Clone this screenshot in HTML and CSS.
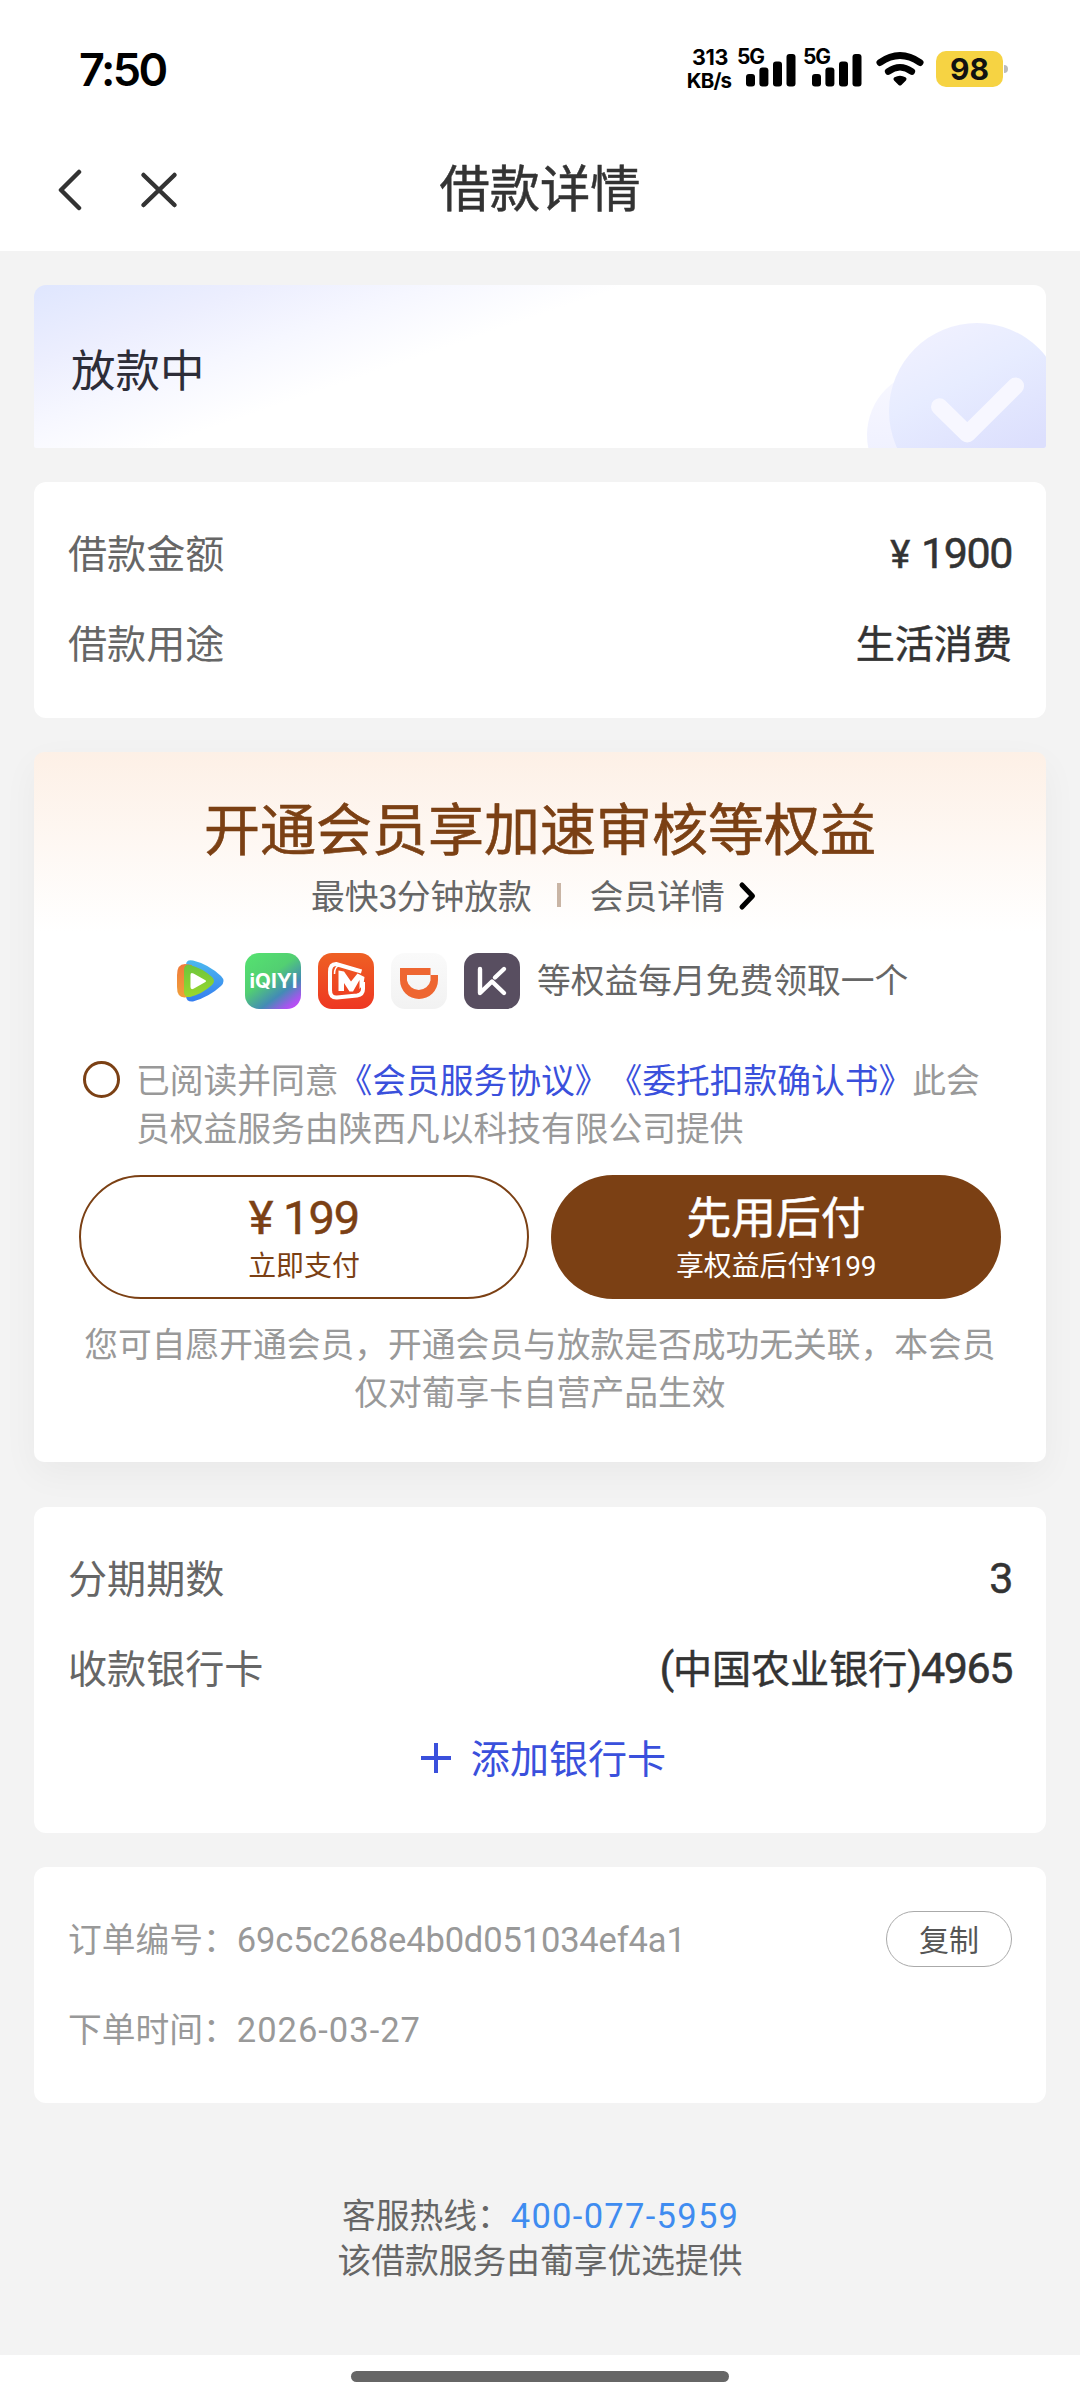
FILE: index.html
```html
<!DOCTYPE html>
<html lang="zh-CN">
<head>
<meta charset="utf-8">
<title>借款详情</title>
<link rel="stylesheet" href="styles.css">
</head>
<body>
<header class="top">
  <div class="status">
    <span class="clock">7:50</span>
    <div class="indicators">
      <div class="speed"><span class="speed-value">313</span><span class="speed-unit">KB/s</span></div>
      <svg class="signal" viewBox="0 0 62 46" width="62" height="46">
        <text class="net" x="0" y="21.5" textLength="28">5G</text>
        <rect x="9" y="32" width="9" height="12.5" rx="3"/><rect x="22.400" y="25.500" width="9" height="19" rx="3"/>
        <rect x="36" y="19.500" width="9" height="25" rx="3"/><rect x="49.500" y="12" width="9" height="32.500" rx="3"/>
      </svg>
      <svg class="signal" viewBox="0 0 62 46" width="62" height="46">
        <text class="net" x="0" y="21.5" textLength="28">5G</text>
        <rect x="9" y="32" width="9" height="12.5" rx="3"/><rect x="22.400" y="25.500" width="9" height="19" rx="3"/>
        <rect x="36" y="19.500" width="9" height="25" rx="3"/><rect x="49.500" y="12" width="9" height="32.500" rx="3"/>
      </svg>
      <svg class="wifi" viewBox="0 0 48 36" width="48" height="36" fill="none" stroke="#000" stroke-linecap="round">
        <path d="M4 11.5Q24-2.5 44 11.5" stroke-width="7"/>
        <path d="M12.2 20.5Q24 12 35.8 20.5" stroke-width="6.6"/>
        <path d="M19.5 28Q24 25.5 28.5 28L24 32.5Z" fill="#000" stroke-width="4" stroke-linejoin="round"/>
      </svg>
      <div class="battery"><span class="level">98</span></div><i class="nub"></i>
    </div>
  </div>
  <nav class="nav">
    <div class="nav-icons">
      <svg viewBox="0 0 26 44" width="26" height="44"><path d="M23 4L5 22L23 40"/></svg>
      <svg viewBox="0 0 40 40" width="40" height="40"><path d="M4.5 5L35.5 35M35.5 5L4.5 35"/></svg>
    </div>
    <h1 class="nav-title">借款详情</h1>
  </nav>
</header>

<main class="content">
  <section class="banner">
    <h2 class="banner-title">放款中</h2>
    <svg class="banner-art" viewBox="0 0 180 126" width="180" height="126">
      <defs>
        <linearGradient id="disc" x1="0.2" y1="0" x2="0.7" y2="1"><stop offset="0" stop-color="#f1f1ff"/><stop offset=".35" stop-color="#e7ecff"/><stop offset=".8" stop-color="#dcdffd"/></linearGradient>
        <linearGradient id="disc2" x1="0" y1="0" x2="0" y2="1"><stop offset="0" stop-color="#f8f8ff"/><stop offset="1" stop-color="#ebedff"/></linearGradient>
      </defs>
      <circle cx="66" cy="113" r="65" fill="url(#disc2)"/>
      <circle cx="111" cy="89" r="88" fill="url(#disc)"/>
      <path d="M73.5 84.7L101.3 112L149.6 64" fill="none" stroke="#f7f7ff" stroke-width="17" stroke-linecap="round" stroke-linejoin="round"/>
    </svg>
  </section>

  <section class="card">
    <div class="row"><span class="label">借款金额</span><span class="value"><span class="num yen">¥</span><span class="num">1900</span></span></div>
    <div class="row"><span class="label">借款用途</span><span class="value">生活消费</span></div>
  </section>

  <section class="member">
    <h2 class="member-title">开通会员享加速审核等权益</h2>
    <div class="member-sub">
      <span>最快<span class="num three">3</span>分钟放款</span>
      <i class="divider"></i>
      <span>会员详情</span>
      <svg class="arrow" viewBox="0 0 20 30" width="20" height="30"><path d="M4 4L14.5 15L4 26"/></svg>
    </div>
    <div class="perks">
      <svg viewBox="0 0 56 56" width="56" height="56">
        <defs>
          <linearGradient id="tb" x1="0" y1="0" x2="0" y2="1"><stop offset="0" stop-color="#4cb9ee"/><stop offset="1" stop-color="#357df0"/></linearGradient>
          <linearGradient id="to" x1="0" y1="0" x2="0" y2="1"><stop offset="0" stop-color="#f07a3a"/><stop offset="1" stop-color="#f0a03a"/></linearGradient>
          <linearGradient id="tg" x1="0" y1="0" x2="0" y2="1"><stop offset="0" stop-color="#6cc53c"/><stop offset="1" stop-color="#9bd82c"/></linearGradient>
        </defs>
        <path d="M14 12Q14 6 21 7.5Q36 11 49 23Q54 28 49 33Q37 44 21 48.5Q14 49 14 43Z" fill="url(#tb)"/>
        <path d="M5 22Q5 11 13 11L20 12V43L13 44.500Q5 45 5 34Z" fill="url(#to)"/>
        <path d="M12 17Q12 11 18 12Q30 15 40 24Q44 28 40 32Q30 41 18 44Q12 44.500 12 39Z" fill="url(#tg)"/>
        <path d="M18.500 22Q18.500 19 21.500 20.500L33 27Q35 28 33 29.300L21.500 35.800Q18.500 37 18.500 34Z" fill="#fff"/>
      </svg>
      <svg viewBox="0 0 56 56" width="56" height="56">
        <defs><linearGradient id="iq" x1="0.15" y1="0" x2="0.9" y2="1"><stop offset="0" stop-color="#55e070"/><stop offset=".4" stop-color="#52cf72"/><stop offset=".7" stop-color="#438bb5"/><stop offset=".9" stop-color="#a755ee"/><stop offset="1" stop-color="#c548fa"/></linearGradient></defs>
        <rect width="56" height="56" rx="14" fill="url(#iq)"/>
        <text class="iqiyi" x="4.500" y="35" textLength="48" lengthAdjust="spacingAndGlyphs">iQIYI</text>
      </svg>
      <svg viewBox="0 0 56 56" width="56" height="56">
        <defs><linearGradient id="mg" x1="0" y1="0" x2="0" y2="1"><stop offset="0" stop-color="#ee6024"/><stop offset="1" stop-color="#ee3722"/></linearGradient></defs>
        <rect width="56" height="56" rx="14" fill="url(#mg)"/>
        <g fill="#fff">
          <path d="M43.500 18.500L18 11Q12 11 12 19V37Q12 45 19 44.500L39 42.500Q45 41.500 45 36V29" fill="none" stroke="#fff" stroke-width="4" stroke-linejoin="round"/>
          <path d="M43 18L21 12.500Q16.500 14 16.500 21" fill="none" stroke="#fff" stroke-width="1.500"/>
          <path d="M20.500 17.500L26 18.500L33 28.500L39.500 20.500L46.500 24L45.500 31L41.500 36V27L35 38.500H31.500L26 30V38H20.500Z"/>
        </g>
      </svg>
      <svg viewBox="0 0 56 56" width="56" height="56">
        <defs><linearGradient id="dd" x1="0" y1="0" x2="0" y2="1"><stop offset="0" stop-color="#fafafa"/><stop offset="1" stop-color="#f2f2f2"/></linearGradient></defs>
        <rect width="56" height="56" rx="14" fill="url(#dd)"/>
        <path d="M9 15H39.500V22H16V27.500A12 12 0 0 0 39.500 27.500V22H47V27A19 19 0 0 1 9 27Z" fill="#ee6631"/>
      </svg>
      <svg viewBox="0 0 56 56" width="56" height="56">
        <rect width="56" height="56" rx="14" fill="#584e60"/>
        <path d="M16 16V40L28 28.500L40 40M31 24.500L40 16" fill="none" stroke="#fff" stroke-width="4.400" stroke-linecap="round" stroke-linejoin="round"/>
      </svg>
      <span class="perks-text">等权益每月免费领取一个</span>
    </div>
    <div class="agree">
      <i class="radio"></i>
      <p class="agree-text">已阅读并同意<a class="link">《会员服务协议》</a><a class="link">《委托扣款确认书》</a>此会员权益服务由陕西凡以科技有限公司提供</p>
    </div>
    <div class="buttons">
      <button class="btn btn-line"><span class="btn-main"><span class="num price">¥ 199</span></span><span class="btn-sub">立即支付</span></button>
      <button class="btn btn-fill"><span class="btn-main">先用后付</span><span class="btn-sub">享权益后付<span class="num small">¥199</span></span></button>
    </div>
    <p class="note">您可自愿开通会员，开通会员与放款是否成功无关联，本会员仅对葡享卡自营产品生效</p>
  </section>

  <section class="card">
    <div class="row"><span class="label">分期期数</span><span class="value"><span class="num">3</span></span></div>
    <div class="row"><span class="label">收款银行卡</span><span class="value"><span class="num">(</span>中国农业银行<span class="num">)4965</span></span></div>
    <div class="row add">
      <svg viewBox="0 0 30 32" width="30" height="32"><path d="M15 1V31M0 16H30"/></svg>
      <span>添加银行卡</span>
    </div>
  </section>

  <section class="card order">
    <div class="row"><span>订单编号：<span class="num code">69c5c268e4b0d051034ef4a1</span></span><button class="copy">复制</button></div>
    <div class="row"><span>下单时间：<span class="num date">2026-03-27</span></span></div>
  </section>

  <footer class="foot">
    <p>客服热线：<span class="num phone">400-077-5959</span></p>
    <p>该借款服务由葡享优选提供</p>
  </footer>
</main>
<div class="home"><i class="home-bar"></i></div>
</body>
</html>
```
FILE: styles.css
```css
* { box-sizing: border-box; margin: 0; padding: 0; }
body {
  width: 1080px;
  height: 2400px;
  display: flex;
  flex-direction: column;
  background: #f3f3f3;
  font-family: "Noto Sans CJK SC", sans-serif;
  font-size: 33.75px;
  line-height: 48px;
  color: #333;
  text-spacing-trim: space-all;
  overflow: hidden;
}
h1, h2 { font-weight: 400; }
button { font-family: inherit; border: 0; background: none; color: inherit; }
i { display: block; }
svg { display: block; flex: none; }

.num { font-family: Roboto, sans-serif; line-height: 1; }

.top { height: 251px; background: #fff; }
.status { height: 126px; padding: 44px 72px 0 79px; display: flex; justify-content: space-between; }
.clock { padding-top: 1px; font: 600 45px/50px Inter, sans-serif; letter-spacing: -2.5px; color: #000; }
.indicators { display: flex; height: 50px; align-items: center; }
.speed { display: flex; flex-direction: column; align-items: center; width: 46px; margin-right: 4px; font: 700 21.5px/24px Inter, sans-serif; color: #000; }
.speed-value { letter-spacing: -.3px; }
.speed-unit { margin-left: -2px; font-size: 20.5px; letter-spacing: -.8px; }
.signal { margin: -9px 4px 0 0; }
.net { font: 700 21px Inter, sans-serif; }
.wifi { margin: 0 12px 0 7px; }
.battery { width: 67px; height: 36px; border-radius: 10px; background: #f6d343; display: flex; align-items: center; justify-content: center; }
.level { font: 700 30px/36px Inter, sans-serif; color: #111; }
.nub { width: 4px; height: 8px; margin-left: 1px; border-radius: 0 4px 4px 0; background: #bbb; }

.nav { height: 125px; display: grid; grid-template-columns: 1fr auto 1fr; align-items: center; padding: 0 56px; }
.nav-icons { display: flex; align-items: center; gap: 57px; padding-top: 3px; }
.nav-icons path { fill: none; stroke: #333; stroke-width: 4.5; stroke-linecap: round; stroke-linejoin: round; }
.nav-title { font-size: 50.3px; line-height: 60px; padding-bottom: 7px; -webkit-text-stroke: .5px; }

.content { height: 2104px; padding: 34px 34px 0; }
.banner { height: 163px; border-radius: 12px 12px 2px 2px; overflow: hidden; display: flex; justify-content: space-between; background: linear-gradient(161deg, #dfe6fe 0%, #eceefe 15%, #f6f7ff 27%, #fff 40%); }
.banner-title { padding: 1px 0 0 37px; font-size: 44.5px; line-height: 164px; color: #2d2d38; }
.banner-art { margin-top: 37px; }

.card { margin-top: 34px; padding: 24px 34px 32px; border-radius: 12px; background: #fff; font-size: 39.1px; }
.row { height: 90px; display: flex; align-items: center; justify-content: space-between; }
.label { color: #666; }
.value { -webkit-text-stroke: .5px; }
.value .num { font-size: 43px; letter-spacing: -1.4px; }
.value .yen { font-size: 38px; margin-right: 12px; }

.member { height: 710px; margin-top: 34px; padding: 42px 45px 0; border-radius: 10px; background: linear-gradient(#fdf0e6 0, #fff 180px); box-shadow: 0 12px 36px rgba(0, 20, 15, .045); }
.member-title { margin: -3px 0 5px; font-size: 56px; line-height: 70px; text-align: center; color: #7b4014; -webkit-text-stroke: .6px; }
.member-sub { display: flex; align-items: center; height: 56px; padding: 2px 0 0 232px; color: #666; }
.divider { width: 4px; height: 24px; margin: 0 29px 0 25px; background: #c9b5a5; }
.three { font-size: 34px; letter-spacing: -1px; }
.arrow { margin-left: 13px; margin-top: 1px; }
.arrow path { fill: none; stroke: #000; stroke-width: 5; stroke-linecap: round; stroke-linejoin: round; }
.perks { display: flex; align-items: center; gap: 17px; margin-top: 31px; padding-left: 93px; color: #666; }
.perks-text { padding-bottom: 5px; }
.iqiyi { font: 700 20px Inter, sans-serif; fill: #fff; }
.agree { display: flex; align-items: flex-start; margin-top: 45px; padding-left: 4px; }
.radio { flex: none; width: 37px; height: 37px; margin: 7px 16px 0 0; border: 3px solid #7b4014; border-radius: 50%; }
.agree-text { width: 860px; padding-top: 1px; color: #999; }
.link { color: #3a50dc; }
.buttons { display: flex; gap: 22px; margin-top: 24px; }
.btn { width: 450px; height: 124px; border-radius: 62px; display: flex; flex-direction: column; align-items: center; padding-top: 12px; color: #7b4014; }
.btn-line { border: 2px solid #7b4014; padding-top: 10px; }
.btn-fill { background: #7b4014; color: #fff; }
.btn-main { height: 57px; font-size: 44.8px; line-height: 56px; -webkit-text-stroke: .5px; }
.btn-sub { height: 40px; font-size: 27.9px; line-height: 40px; }
.price { font-size: 47px; letter-spacing: -1px; }
.small { font-size: 28px; letter-spacing: -.3px; }
.note { margin: 20px -5px 0; text-align: center; color: #999; }

.member + .card { margin-top: 45px; }
.add { justify-content: center; gap: 20px; color: #3a50dc; padding-left: 7px; }
.add svg { margin-top: 3px; }
.add path { stroke: #3a50dc; stroke-width: 4; }
.order { padding-top: 26px; padding-bottom: 30px; font-size: 33.75px; color: #999; }
.code { font-size: 34.5px; letter-spacing: -.15px; }
.date { font-size: 34.5px; letter-spacing: 1px; }
.copy { width: 126px; height: 56px; margin-top: 2px; border: 1px solid #aaa; border-radius: 28px; font-size: 30px; line-height: 50px; padding-bottom: 3px; color: #555; }
.foot { margin-top: 88px; text-align: center; line-height: 45px; color: #666; }
.phone { font-size: 34.5px; letter-spacing: 1.3px; margin-right: -1.3px; color: #3f8cf0; }
.home { height: 45px; padding-top: 16px; background: #fff; }
.home-bar { width: 378px; height: 11px; margin: 0 auto; border-radius: 6px; background: #666; }
```
